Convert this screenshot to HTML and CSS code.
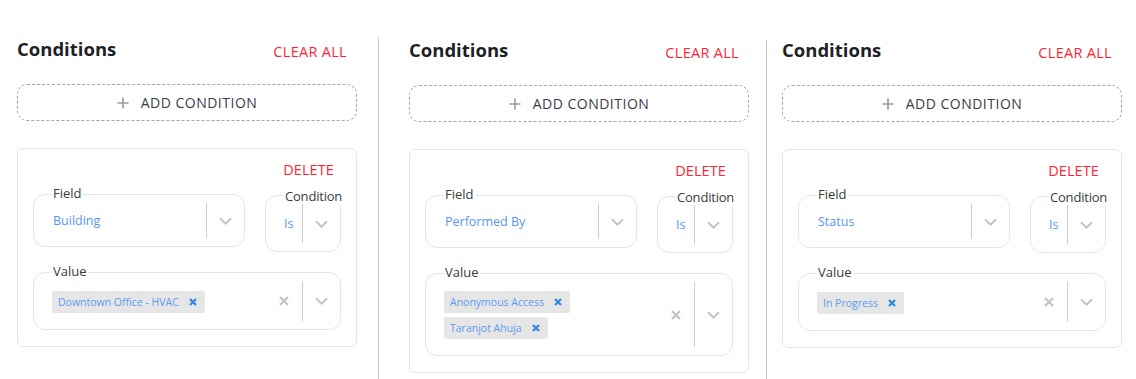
FILE: index.html
```html
<!DOCTYPE html>
<html lang="en">
<head>
<meta charset="utf-8">
<title>Conditions</title>
<link rel="stylesheet" href="styles.css">
</head>
<body>
<main class="board">
  <section class="panel">
    <header class="panel-head">
      <h2 class="title">Conditions</h2>
      <button class="link-btn clear">CLEAR ALL</button>
    </header>
    <button class="add-btn">
      <svg class="plus" width="12" height="12" viewBox="0 0 12 12"><path d="M6 0.5V11.5M0.5 6H11.5"/></svg>
      <span>ADD CONDITION</span>
    </button>
    <div class="card">
      <div class="card-top"><button class="link-btn delete">DELETE</button></div>
      <div class="card-row">
        <div class="select select-field">
          <span class="select-label">Field</span>
          <span class="select-value">Building</span>
          <span class="select-sep"></span>
          <span class="select-arrow"><svg width="13" height="8" viewBox="0 0 13 8"><path d="M1 1.2L6.5 6.6L12 1.2"/></svg></span>
        </div>
        <div class="select select-cond">
          <span class="select-label label-cond">Condition</span>
          <span class="select-value">Is</span>
          <span class="select-sep"></span>
          <span class="select-arrow"><svg width="13" height="8" viewBox="0 0 13 8"><path d="M1 1.2L6.5 6.6L12 1.2"/></svg></span>
        </div>
      </div>
      <div class="select select-multi">
        <span class="select-label">Value</span>
        <div class="chips">
          <span class="chip">Downtown Office - HVAC<svg class="chip-x" width="8" height="8" viewBox="0 0 8 8"><path d="M1 1L7 7M7 1L1 7"/></svg></span>
        </div>
        <span class="select-clear"><svg width="10" height="10" viewBox="0 0 10 10"><path d="M1 1L9 9M9 1L1 9"/></svg></span>
        <span class="select-sep"></span>
        <span class="select-arrow"><svg width="13" height="8" viewBox="0 0 13 8"><path d="M1 1.2L6.5 6.6L12 1.2"/></svg></span>
      </div>
    </div>
  </section>

  <div class="divider divider-a"></div>

  <section class="panel panel-shift">
    <header class="panel-head">
      <h2 class="title">Conditions</h2>
      <button class="link-btn clear">CLEAR ALL</button>
    </header>
    <button class="add-btn">
      <svg class="plus" width="12" height="12" viewBox="0 0 12 12"><path d="M6 0.5V11.5M0.5 6H11.5"/></svg>
      <span>ADD CONDITION</span>
    </button>
    <div class="card">
      <div class="card-top"><button class="link-btn delete">DELETE</button></div>
      <div class="card-row">
        <div class="select select-field">
          <span class="select-label">Field</span>
          <span class="select-value">Performed By</span>
          <span class="select-sep"></span>
          <span class="select-arrow"><svg width="13" height="8" viewBox="0 0 13 8"><path d="M1 1.2L6.5 6.6L12 1.2"/></svg></span>
        </div>
        <div class="select select-cond">
          <span class="select-label label-cond">Condition</span>
          <span class="select-value">Is</span>
          <span class="select-sep"></span>
          <span class="select-arrow"><svg width="13" height="8" viewBox="0 0 13 8"><path d="M1 1.2L6.5 6.6L12 1.2"/></svg></span>
        </div>
      </div>
      <div class="select select-multi">
        <span class="select-label">Value</span>
        <div class="chips">
          <span class="chip">Anonymous Access<svg class="chip-x" width="8" height="8" viewBox="0 0 8 8"><path d="M1 1L7 7M7 1L1 7"/></svg></span>
          <span class="chip">Taranjot Ahuja<svg class="chip-x" width="8" height="8" viewBox="0 0 8 8"><path d="M1 1L7 7M7 1L1 7"/></svg></span>
        </div>
        <span class="select-clear"><svg width="10" height="10" viewBox="0 0 10 10"><path d="M1 1L9 9M9 1L1 9"/></svg></span>
        <span class="select-sep"></span>
        <span class="select-arrow"><svg width="13" height="8" viewBox="0 0 13 8"><path d="M1 1.2L6.5 6.6L12 1.2"/></svg></span>
      </div>
    </div>
  </section>

  <div class="divider divider-b"></div>

  <section class="panel panel-shift">
    <header class="panel-head">
      <h2 class="title">Conditions</h2>
      <button class="link-btn clear">CLEAR ALL</button>
    </header>
    <button class="add-btn">
      <svg class="plus" width="12" height="12" viewBox="0 0 12 12"><path d="M6 0.5V11.5M0.5 6H11.5"/></svg>
      <span>ADD CONDITION</span>
    </button>
    <div class="card">
      <div class="card-top"><button class="link-btn delete">DELETE</button></div>
      <div class="card-row">
        <div class="select select-field">
          <span class="select-label">Field</span>
          <span class="select-value">Status</span>
          <span class="select-sep"></span>
          <span class="select-arrow"><svg width="13" height="8" viewBox="0 0 13 8"><path d="M1 1.2L6.5 6.6L12 1.2"/></svg></span>
        </div>
        <div class="select select-cond">
          <span class="select-label label-cond">Condition</span>
          <span class="select-value">Is</span>
          <span class="select-sep"></span>
          <span class="select-arrow"><svg width="13" height="8" viewBox="0 0 13 8"><path d="M1 1.2L6.5 6.6L12 1.2"/></svg></span>
        </div>
      </div>
      <div class="select select-multi">
        <span class="select-label">Value</span>
        <div class="chips">
          <span class="chip">In Progress<svg class="chip-x" width="8" height="8" viewBox="0 0 8 8"><path d="M1 1L7 7M7 1L1 7"/></svg></span>
        </div>
        <span class="select-clear"><svg width="10" height="10" viewBox="0 0 10 10"><path d="M1 1L9 9M9 1L1 9"/></svg></span>
        <span class="select-sep"></span>
        <span class="select-arrow"><svg width="13" height="8" viewBox="0 0 13 8"><path d="M1 1.2L6.5 6.6L12 1.2"/></svg></span>
      </div>
    </div>
  </section>
</main>
</body>
</html>
```

FILE: styles.css
```css
* { box-sizing: border-box; }

body {
  margin: 0;
  background: #ffffff;
  font-family: "Open Sans", "Noto Sans", sans-serif;
  color: #222;
}

.board {
  display: flex;
  align-items: stretch;
  min-height: 379px;
  padding-left: 17px;
}

.panel {
  flex: none;
  width: 340px;
  padding-top: 37px;
}

.panel-shift { padding-top: 38px; }

.divider {
  flex: none;
  width: 1px;
  background: #c9c9c9;
}

.divider-a { margin: 37px 30px 0 21px; }
.divider-b { margin: 40px 15px 0 17px; }

.panel-head {
  display: flex;
  justify-content: space-between;
  align-items: flex-start;
  height: 24px;
}

.title {
  margin: 0;
  font-size: 18.5px;
  line-height: 24px;
  font-weight: 700;
  color: #1f1f24;
}

.link-btn {
  border: 0;
  background: none;
  padding: 0;
  font-family: inherit;
  font-size: 14.5px;
  line-height: 20px;
  color: #ff1f36;
  cursor: pointer;
}

.clear {
  margin-top: 5px;
  margin-right: 10px;
  letter-spacing: 0.3px;
}

.delete { letter-spacing: 0.1px; }

.add-btn {
  margin-top: 23px;
  width: 100%;
  height: 37px;
  border: 1px dashed #a4a4b2;
  border-radius: 10px;
  background: #fff;
  display: flex;
  align-items: center;
  justify-content: center;
  gap: 12px;
  font-family: inherit;
  font-size: 14px;
  letter-spacing: 0.5px;
  color: #3c3c4a;
  padding: 0;
}

.plus path {
  stroke: #9a9a9a;
  stroke-width: 1.6;
  fill: none;
}

.card {
  margin-top: 27px;
  border: 1px solid #e6e6e6;
  border-radius: 6px;
  padding: 11px 15px 16px;
}

.card-top {
  display: flex;
  justify-content: flex-end;
  padding-right: 7px;
  height: 20px;
}

.card-row {
  display: flex;
  align-items: flex-start;
  gap: 20px;
  margin-top: 14px;
}

.select {
  position: relative;
  display: flex;
  align-items: center;
  border: 1px solid #e6e6e6;
  border-radius: 12px;
}

.select-field {
  flex: 1;
  height: 53px;
  padding-left: 19px;
}

.select-cond {
  flex: none;
  width: 76px;
  height: 57px;
  margin-top: 1px;
  padding-left: 18px;
}

.select-label {
  position: absolute;
  left: 18px;
  top: -10px;
  padding: 0 1px;
  background: #fff;
  font-size: 13px;
  line-height: 16px;
  color: #3a3a3a;
  white-space: nowrap;
}

.label-cond {
  top: -8px;
  letter-spacing: -0.2px;
}

.select-value {
  flex: 1;
  font-size: 12.5px;
  color: #5897ee;
}

.select-sep {
  align-self: stretch;
  width: 1px;
  margin: 8px 0;
  background: #cdcdcd;
}

.select-arrow {
  flex: none;
  width: 37px;
  display: flex;
  justify-content: center;
}

.select-arrow path {
  stroke: #c4c4c4;
  stroke-width: 2;
  fill: none;
}

.select-multi {
  margin-top: 20px;
  min-height: 58px;
  padding-left: 18px;
}

.chips {
  flex: 1;
  display: flex;
  flex-wrap: wrap;
  gap: 4px;
  padding: 17px 0 16px;
}

.chip {
  display: inline-flex;
  align-items: center;
  gap: 10px;
  height: 22px;
  padding: 0 8px 0 6px;
  background: #e6e6e6;
  border-radius: 2px;
  font-size: 10.5px;
  color: #5c9bf0;
}

.chip-x path {
  stroke: #2f89e0;
  stroke-width: 2.2;
  fill: none;
}

.select-clear {
  flex: none;
  width: 36px;
  display: flex;
  justify-content: center;
}

.select-clear path {
  stroke: #c4c4c4;
  stroke-width: 2.2;
  fill: none;
}
```
